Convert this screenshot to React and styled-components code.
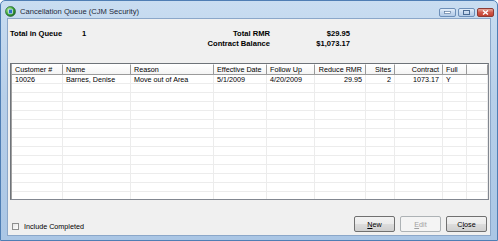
import React from 'react'
import styled, {createGlobalStyle} from 'styled-components'

const GlobalStyle = createGlobalStyle`
  body {
    margin: 0;
    background: #ffffff;
    font-family: "Liberation Sans", Arial, sans-serif;
  }
`

const Window = styled.div`
  width: 498px;
  height: 241px;
  box-sizing: border-box;
  display: flex;
  flex-direction: column;
  background: linear-gradient(180deg, #c9ddf1 0%, #b7cfe9 40%, #aac6e5 100%);
  border: 1px solid #4f7eb4;
  border-radius: 5px 5px 0 0;
`

const TitleBar = styled.div`
  height: 17px;
  display: flex;
  align-items: flex-start;
  padding-left: 4px;
`

const TitleText = styled.span`
  font-size: 7.6px;
  color: #1e2a3a;
  margin-top: 6px;
  margin-left: 4px;
  white-space: nowrap;
`

const TitleIcon = styled.svg`
  margin-top: 5px;
  flex: none;
`

const WinButtons = styled.div`
  margin-left: auto;
  margin-top: 7px;
  margin-right: 3px;
  display: flex;
  gap: 2px;
`

const WinButton = styled.div`
  width: 17px;
  height: 9px;
  box-sizing: border-box;
  border: 1px solid ${({close}) => close ? '#8c3b35' : '#6d8fb8'};
  border-radius: 2px;
  background: ${({close}) => close
    ? 'linear-gradient(180deg, #e9a99c 0%, #d0584a 50%, #c2402f 100%)'
    : 'linear-gradient(180deg, #e4eef9 0%, #c5d8ee 50%, #b3cbe7 100%)'};
  display: flex;
  align-items: center;
  justify-content: center;
`

const Client = styled.div`
  flex: 1;
  margin: 0 6px 4px 6px;
  background: #f0f0f0;
  border: 1px solid #8ba7c9;
  display: flex;
  flex-direction: column;
  padding: 10px 0 3px 2px;
  min-height: 0;
`

const Summary = styled.div`
  display: grid;
  grid-template-columns: 72px 108px 80px 80px;
  grid-auto-rows: 10px;
  font-size: 7.6px;
  font-weight: bold;
  color: #000;
`

const SumCell = styled.div`
  text-align: ${({right}) => right ? 'right' : 'left'};
  line-height: 10px;
  white-space: nowrap;
`

const GridBox = styled.div`
  margin-top: 14px;
  margin-right: 1px;
  height: 137px;
  box-sizing: border-box;
  background: #fff;
  border: 1px solid #828790;
  border-top-color: #6e7379;
  border-left-color: #6e7379;
  box-shadow: inset 1px 1px 0 #a0a0a0;
  overflow: hidden;
  font-size: 7.2px;
  color: #000;
`

const COLS = '51px 68px 83px 53px 48px 51px 29px 48px 24px 1fr'

const HeaderRow = styled.div`
  display: grid;
  grid-template-columns: ${COLS};
  height: 11px;
  margin-left: 1px;
`

const HeaderCell = styled.div`
  box-sizing: border-box;
  border-right: 1px solid #9a9a9a;
  border-bottom: 1px solid #9a9a9a;
  border-top: 1px solid #fff;
  background: linear-gradient(180deg, #ffffff 0%, #f4f4f4 100%);
  padding: 0 3px;
  line-height: 9px;
  text-align: ${({right}) => right ? 'right' : 'left'};
  white-space: nowrap;
  overflow: hidden;
`

const Row = styled.div`
  display: grid;
  grid-template-columns: ${COLS};
  height: 9px;
  margin-left: 1px;
`

const Cell = styled.div`
  box-sizing: border-box;
  border-right: 1px solid #ececec;
  border-bottom: 1px solid #ececec;
  padding: 0 3px;
  line-height: 9px;
  text-align: ${({right}) => right ? 'right' : 'left'};
  white-space: nowrap;
  overflow: hidden;
`

const BottomBar = styled.div`
  display: flex;
  align-items: center;
  margin-top: auto;
  padding-right: 3px;
`

const CheckLabel = styled.label`
  display: flex;
  align-items: center;
  gap: 5px;
  font-size: 7.2px;
  color: #000;
  margin-left: 2px;
  margin-top: 4px;
`

const CheckBox = styled.span`
  width: 7px;
  height: 7px;
  box-sizing: border-box;
  border: 1px solid #8e8f8f;
  background: linear-gradient(135deg, #e6e6e6 0%, #ffffff 100%);
`

const Buttons = styled.div`
  margin-left: auto;
  display: flex;
  gap: 5px;
`

const Button = styled.div`
  width: 41px;
  height: 16px;
  box-sizing: border-box;
  border: 1px solid ${({disabled}) => disabled ? '#adb2b5' : '#707070'};
  border-radius: 2px;
  background: ${({disabled}) => disabled
    ? '#f4f4f4'
    : 'linear-gradient(180deg, #f2f2f2 0%, #ebebeb 49%, #dddddd 50%, #cfcfcf 100%)'};
  display: flex;
  align-items: center;
  justify-content: center;
  font-size: 7.2px;
  color: ${({disabled}) => disabled ? '#a0a0a0' : '#000'};
`

const columns = [
  {title: 'Customer #'},
  {title: 'Name'},
  {title: 'Reason'},
  {title: 'Effective Date'},
  {title: 'Follow Up'},
  {title: 'Reduce RMR', right: true},
  {title: 'Sites', right: true},
  {title: 'Contract', right: true},
  {title: 'Full'},
  {title: ''},
]

const rows = [
  ['10026', 'Barnes, Denise', 'Move out of Area', '5/1/2009', '4/20/2009', '29.95', '2', '1073.17', 'Y', ''],
]

const EMPTY_ROWS = 14

const App = () => {
  const blank = columns.map(() => '')
  const allRows = [...rows]
  while (allRows.length < EMPTY_ROWS) allRows.push(blank)

  return <>
    <GlobalStyle />
    <Window>
      <TitleBar>
        <TitleIcon width="11" height="11" viewBox="0 0 11 11">
          <defs>
            <radialGradient id="g" cx="35%" cy="35%" r="70%">
              <stop offset="0%" stopColor="#b9f09a" />
              <stop offset="60%" stopColor="#3ca63a" />
              <stop offset="100%" stopColor="#1d6b2a" />
            </radialGradient>
          </defs>
          <circle cx="5.5" cy="5.5" r="5" fill="url(#g)" stroke="#1f5a2a" strokeWidth="0.6" />
          <rect x="3.5" y="3.2" width="4" height="4.5" rx="0.6" fill="#2d6fc9" stroke="#fff" strokeWidth="0.6" />
        </TitleIcon>
        <TitleText>Cancellation Queue (CJM Security)</TitleText>
        <WinButtons>
          <WinButton>
            <svg width="7" height="3" viewBox="0 0 7 3"><rect x="0.5" y="0.5" width="6" height="2" fill="#fff" stroke="#4a6a92" strokeWidth="0.6" /></svg>
          </WinButton>
          <WinButton>
            <svg width="7" height="5" viewBox="0 0 7 5"><rect x="0.5" y="0.5" width="6" height="4" fill="none" stroke="#4a6a92" strokeWidth="1" /></svg>
          </WinButton>
          <WinButton close>
            <svg width="7" height="5" viewBox="0 0 7 5"><path d="M1 0.5 L6 4.5 M6 0.5 L1 4.5" stroke="#fff" strokeWidth="1.4" /></svg>
          </WinButton>
        </WinButtons>
      </TitleBar>
      <Client>
        <Summary>
          <SumCell>Total in Queue</SumCell>
          <SumCell>1</SumCell>
          <SumCell right>Total RMR</SumCell>
          <SumCell right>$29.95</SumCell>
          <SumCell />
          <SumCell />
          <SumCell right>Contract Balance</SumCell>
          <SumCell right>$1,073.17</SumCell>
        </Summary>
        <GridBox>
          <HeaderRow>
            {columns.map((col, i) => <HeaderCell key={i} right={col.right}>{col.title}</HeaderCell>)}
          </HeaderRow>
          {allRows.map((row, r) => (
            <Row key={r}>
              {row.map((val, c) => <Cell key={c} right={columns[c].right}>{val}</Cell>)}
            </Row>
          ))}
        </GridBox>
        <BottomBar>
          <CheckLabel>
            <CheckBox />
            Include Completed
          </CheckLabel>
          <Buttons>
            <Button><u>N</u>ew</Button>
            <Button disabled><u>E</u>dit</Button>
            <Button>C<u>l</u>ose</Button>
          </Buttons>
        </BottomBar>
      </Client>
    </Window>
  </>
}

export default App
